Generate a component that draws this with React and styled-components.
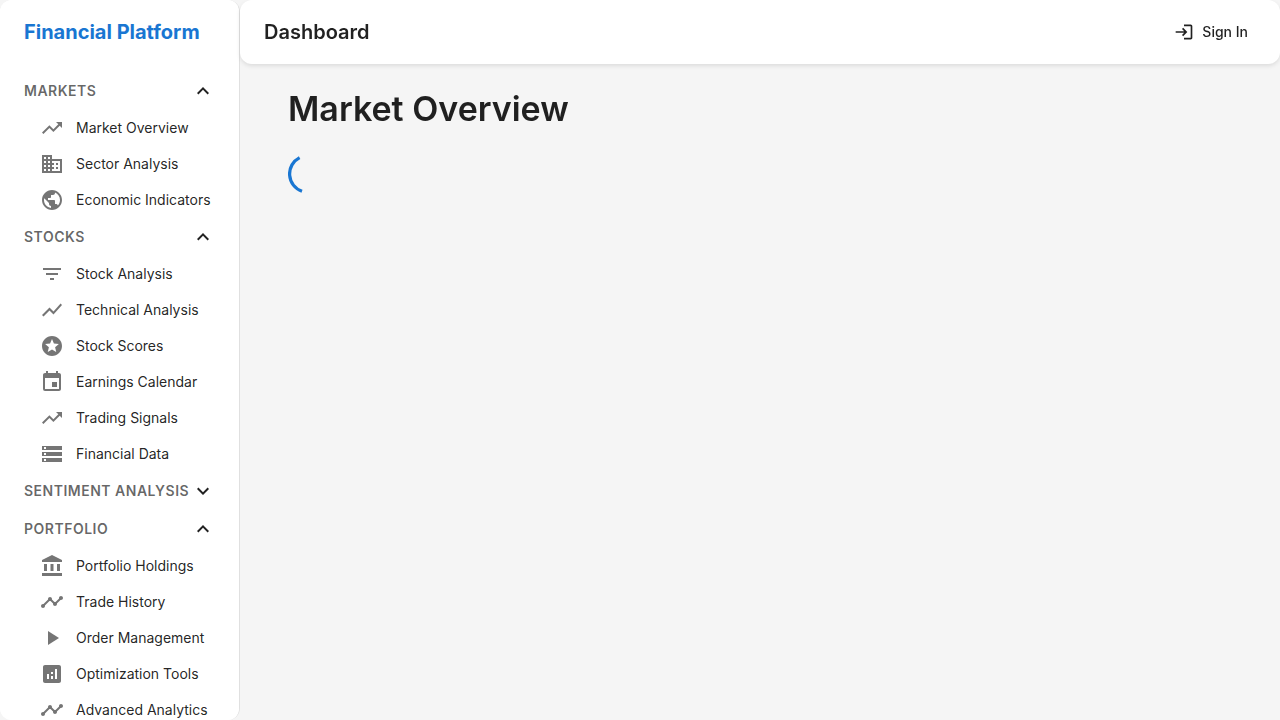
import React, { useState } from "react";
import styled, { createGlobalStyle } from "styled-components";
import {
  MdTrendingUp,
  MdBusiness,
  MdPublic,
  MdFilterList,
  MdShowChart,
  MdStars,
  MdEvent,
  MdStorage,
  MdAccountBalance,
  MdTimeline,
  MdPlayArrow,
  MdAnalytics,
  MdExpandLess,
  MdExpandMore,
  MdLogin,
} from "react-icons/md";

const GlobalStyle = createGlobalStyle`
  *, *::before, *::after { box-sizing: border-box; }
  body {
    margin: 0;
    background: #f5f5f5;
    color: rgba(0, 0, 0, 0.87);
    font-family: Inter, Roboto, "Liberation Sans", sans-serif;
    font-size: 14px;
    line-height: 20px;
  }
`;

const Shell = styled.div`
  display: flex;
  height: 100vh;
`;

const Sidebar = styled.aside`
  flex: 0 0 240px;
  height: 100%;
  overflow-y: auto;
  scrollbar-width: none;
  background: #fff;
  border-right: 1px solid rgba(0, 0, 0, 0.12);
  border-radius: 12px;
`;

const Brand = styled.div`
  display: flex;
  align-items: center;
  height: 64px;
  padding: 0 24px;
  color: #1976d2;
  font-size: 20px;
  font-weight: 700;
  line-height: 32px;
  white-space: nowrap;
`;

const Nav = styled.nav`
  padding: 8px 0;
`;

const SectionButton = styled.button`
  display: flex;
  align-items: center;
  justify-content: space-between;
  width: 100%;
  height: 38px;
  padding: 0 24px;
  border: 0;
  background: transparent;
  color: rgba(0, 0, 0, 0.6);
  font: inherit;
  font-weight: 600;
  letter-spacing: 0.5px;
  text-transform: uppercase;
  white-space: nowrap;
  cursor: pointer;

  svg {
    flex: none;
    color: rgba(0, 0, 0, 0.87);
  }
`;

const ItemList = styled.ul`
  margin: 0;
  padding: 0;
  list-style: none;
`;

const ItemLink = styled.a`
  display: flex;
  align-items: center;
  gap: 12px;
  height: 36px;
  padding-left: 40px;
  color: rgba(0, 0, 0, 0.87);
  text-decoration: none;
  white-space: nowrap;

  svg {
    flex: none;
    color: rgba(0, 0, 0, 0.54);
  }
`;

const Main = styled.div`
  flex: 1;
  min-width: 0;
`;

const TopBar = styled.header`
  display: flex;
  align-items: center;
  justify-content: space-between;
  height: 64px;
  padding: 0 24px;
  background: #fff;
  border-radius: 12px;
  box-shadow: 0 2px 4px rgba(0, 0, 0, 0.1);
`;

const BarTitle = styled.div`
  font-size: 20px;
  font-weight: 600;
  line-height: 32px;
`;

const SignInButton = styled.button`
  display: flex;
  align-items: center;
  gap: 8px;
  padding: 8px;
  border: 0;
  background: transparent;
  color: inherit;
  font: inherit;
  font-weight: 500;
  cursor: pointer;
`;

const Content = styled.main`
  padding: 24px 48px;
`;

const PageTitle = styled.h1`
  margin: 0 0 24px;
  font-size: 34px;
  font-weight: 600;
  line-height: 42px;
`;

const Spinner = styled.svg`
  display: block;
  width: 40px;
  height: 40px;
  fill: none;
  stroke: #1976d2;
`;

const sections = [
  {
    title: "Markets",
    items: [
      ["Market Overview", MdTrendingUp],
      ["Sector Analysis", MdBusiness],
      ["Economic Indicators", MdPublic],
    ],
  },
  {
    title: "Stocks",
    items: [
      ["Stock Analysis", MdFilterList],
      ["Technical Analysis", MdShowChart],
      ["Stock Scores", MdStars],
      ["Earnings Calendar", MdEvent],
      ["Trading Signals", MdTrendingUp],
      ["Financial Data", MdStorage],
    ],
  },
  { title: "Sentiment Analysis", items: [] },
  {
    title: "Portfolio",
    items: [
      ["Portfolio Holdings", MdAccountBalance],
      ["Trade History", MdTimeline],
      ["Order Management", MdPlayArrow],
      ["Optimization Tools", MdAnalytics],
      ["Advanced Analytics", MdTimeline],
    ],
  },
];

function Section({ title, items }) {
  const [open, setOpen] = useState(items.length > 0);
  const Chevron = open ? MdExpandLess : MdExpandMore;
  return (
    <section>
      <SectionButton type="button" aria-expanded={open} onClick={() => setOpen(!open)}>
        {title}
        <Chevron size={24} aria-hidden="true" />
      </SectionButton>
      {open && (
        <ItemList>
          {items.map(([label, Icon]) => (
            <li key={label}>
              <ItemLink href="#">
                <Icon size={24} aria-hidden="true" />
                {label}
              </ItemLink>
            </li>
          ))}
        </ItemList>
      )}
    </section>
  );
}

export default function App() {
  return (
    <>
      <GlobalStyle />
      <Shell>
        <Sidebar>
          <Brand>Financial Platform</Brand>
          <Nav aria-label="Main">
            {sections.map((section) => (
              <Section key={section.title} {...section} />
            ))}
          </Nav>
        </Sidebar>
        <Main>
          <TopBar>
            <BarTitle>Dashboard</BarTitle>
            <SignInButton type="button">
              <MdLogin size={20} aria-hidden="true" />
              Sign In
            </SignInButton>
          </TopBar>
          <Content>
            <PageTitle>Market Overview</PageTitle>
            <Spinner viewBox="0 0 40 40" role="progressbar" aria-label="Loading">
              <path d="M11.6 3.6A18.36 18.36 0 0 0 14 37.3" strokeWidth="3.27" />
            </Spinner>
          </Content>
        </Main>
      </Shell>
    </>
  );
}
